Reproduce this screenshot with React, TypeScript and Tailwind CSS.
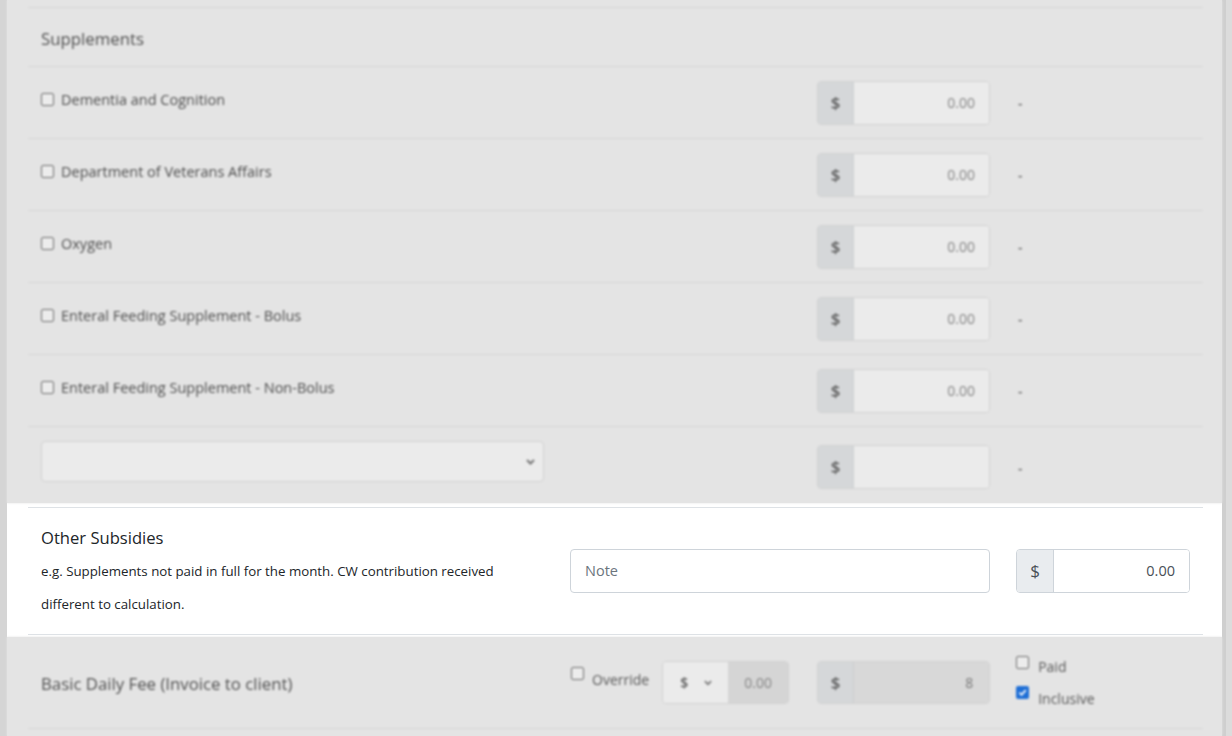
import React from "react";

const Box = ({ checked = false, gray = true }: { checked?: boolean; gray?: boolean }) =>
  checked ? (
    <span className="inline-flex items-center justify-center w-[13px] h-[13px] rounded-[2px] bg-[#1f6fd6] shrink-0">
      <svg width="9" height="9" viewBox="0 0 10 10">
        <path d="M1.5 5.2 L4 7.6 L8.6 2.4" stroke="#fff" strokeWidth="1.8" fill="none" />
      </svg>
    </span>
  ) : (
    <span
      className={`inline-block w-[13px] h-[13px] rounded-[2px] border shrink-0 ${
        gray ? "border-[#6e6e6e] bg-[#ececec]" : "border-[#767676] bg-white"
      }`}
    />
  );

const GrayMoney = ({ value }: { value: string }) => (
  <div className="flex w-[173px] h-[44px] rounded-[4px] border border-[#d2d2d2] overflow-hidden">
    <div className="w-[36px] flex items-center justify-center bg-[#d5d7d9] border-r border-[#cfd1d3] text-[17px] font-semibold text-[#5e5e5e]">
      $
    </div>
    <div className="flex-1 flex items-center justify-end pr-[14px] bg-[#ebebeb] text-[14px] text-[#858585]">
      {value}
    </div>
  </div>
);

const SuppRow = ({ label }: { label: string }) => (
  <div className="flex items-center h-[72px] border-b border-[#d6d6d6]">
    <div className="w-[789px] pl-[13px] pb-[6px] flex items-center gap-[7px] text-[14.5px] text-[#4e4e4e]">
      <Box />
      <span>{label}</span>
    </div>
    <GrayMoney value="0.00" />
    <span className="ml-[28px] text-[#707070] text-[14px] font-semibold">-</span>
  </div>
);

export default function App() {
  return (
    <div className="w-[1232px] h-[736px] flex overflow-hidden bg-[#e4e4e4] font-['Open_Sans','Noto_Sans',sans-serif]">
      <div className="w-[7px] shrink-0 bg-[#d5d5d5]" />
      <div className="w-[1215px] shrink-0 flex flex-col">
        {/* gray top part */}
        <div className="bg-[#e4e4e4] pl-[21px] pr-[19px] blur-[0.8px]">
          <div className="h-[8px] border-b border-[#d6d6d6]" />
          <div className="h-[59px] flex items-center border-b border-[#d6d6d6] pl-[13px] pt-[4px] text-[16.8px] text-[#505050]">
            Supplements
          </div>
          <SuppRow label="Dementia and Cognition" />
          <SuppRow label="Department of Veterans Affairs" />
          <SuppRow label="Oxygen" />
          <SuppRow label="Enteral Feeding Supplement - Bolus" />
          <SuppRow label="Enteral Feeding Supplement - Non-Bolus" />
          <div className="h-[76px] flex items-start">
            <div className="w-[789px] pl-[13px] pt-[14px]">
              <div className="w-[503px] h-[41px] rounded-[4px] border border-[#d2d2d2] bg-[#ebebeb] flex items-center justify-end pr-[8px]">
                <svg width="9" height="6" viewBox="0 0 9 6">
                  <path d="M1 1 L4.5 4.5 L8 1" stroke="#777" strokeWidth="2" fill="none" />
                </svg>
              </div>
            </div>
            <div className="pt-[18px] flex items-center">
              <GrayMoney value="" />
              <span className="ml-[28px] text-[#707070] text-[14px] font-semibold">-</span>
            </div>
          </div>
        </div>

        {/* white highlighted section */}
        <div className="bg-white pl-[21px] pr-[19px] pt-[4px] pb-[2px]">
          <div className="border-t border-b border-[#dee2e6] flex h-[128px]">
            <div className="w-[529px] pl-[13px] pt-[16px]">
              <div className="text-[16.6px] leading-[28px] text-[#212529]">Other Subsidies</div>
              <div className="mt-[3px] text-[13.3px] leading-[33px] text-[#212529]">
                e.g. Supplements not paid in full for the month. CW contribution received
                <br />
                different to calculation.
              </div>
            </div>
            <div className="pl-[13px] pt-[41px]">
              <div className="w-[420px] h-[44px] rounded-[4px] border border-[#ced4da] flex items-center pl-[14px] text-[14.5px] text-[#6c757d]">
                Note
              </div>
            </div>
            <div className="pl-[26px] pt-[41px]">
              <div className="flex w-[174px] h-[44px] rounded-[4px] border border-[#ced4da] overflow-hidden">
                <div className="w-[37px] flex items-center justify-center bg-[#e9ecef] border-r border-[#ced4da] text-[17px] text-[#495057]">
                  $
                </div>
                <div className="flex-1 flex items-center justify-end pr-[14px] bg-white text-[14.5px] text-[#495057]">
                  0.00
                </div>
              </div>
            </div>
          </div>
        </div>

        {/* gray bottom part */}
        <div className="flex-1 bg-[#e4e4e4] pl-[21px] pr-[19px] blur-[0.8px]">
          <div className="h-[92px] border-b border-[#d6d6d6] flex items-center">
            <div className="w-[529px] pl-[13px] pt-[2px] text-[16.8px] text-[#505050]">
              Basic Daily Fee (Invoice to client)
            </div>
            <div className="pl-[14px] flex items-start gap-[8px] -mt-[8px]">
              <Box />
              <span className="text-[14px] text-[#585858] mt-[2px]">Override</span>
            </div>
            <div className="ml-[13px] flex h-[43px] w-[127px] rounded-[4px] border border-[#d2d2d2] overflow-hidden">
              <div className="w-[65px] bg-[#ebebeb] flex items-center pl-[17px] gap-[16px] text-[14px] text-[#5e5e5e]">
                <span className="font-semibold">$</span>
                <svg width="8" height="6" viewBox="0 0 9 6">
                  <path d="M1 1 L4.5 4.5 L8 1" stroke="#777" strokeWidth="2" fill="none" />
                </svg>
              </div>
              <div className="flex-1 bg-[#d5d5d5] flex items-center justify-center text-[14px] text-[#858585]">
                0.00
              </div>
            </div>
            <div className="ml-[28px] flex w-[173px] h-[43px] rounded-[4px] border border-[#d2d2d2] overflow-hidden">
              <div className="w-[36px] flex items-center justify-center bg-[#d5d7d9] border-r border-[#cccecf] text-[17px] font-semibold text-[#5e5e5e]">
                $
              </div>
              <div className="flex-1 flex items-center justify-end pr-[16px] bg-[#d8d8d8] text-[14px] text-[#777]">
                8
              </div>
            </div>
            <div className="ml-[26px] flex flex-col gap-[12px] -mt-[4px]">
              <div className="flex items-start gap-[9px]">
                <Box />
                <span className="text-[14px] text-[#585858] mt-[4px] leading-[14px]">Paid</span>
              </div>
              <div className="flex items-start gap-[9px]">
                <Box checked />
                <span className="text-[14px] text-[#585858] mt-[6px] leading-[14px]">Inclusive</span>
              </div>
            </div>
          </div>
        </div>
      </div>
      <div className="w-[10px] shrink-0 flex">
        <div className="w-[4px] bg-[#cfcfcf]" />
        <div className="flex-1 bg-[#dcdcdc]" />
      </div>
    </div>
  );
}
